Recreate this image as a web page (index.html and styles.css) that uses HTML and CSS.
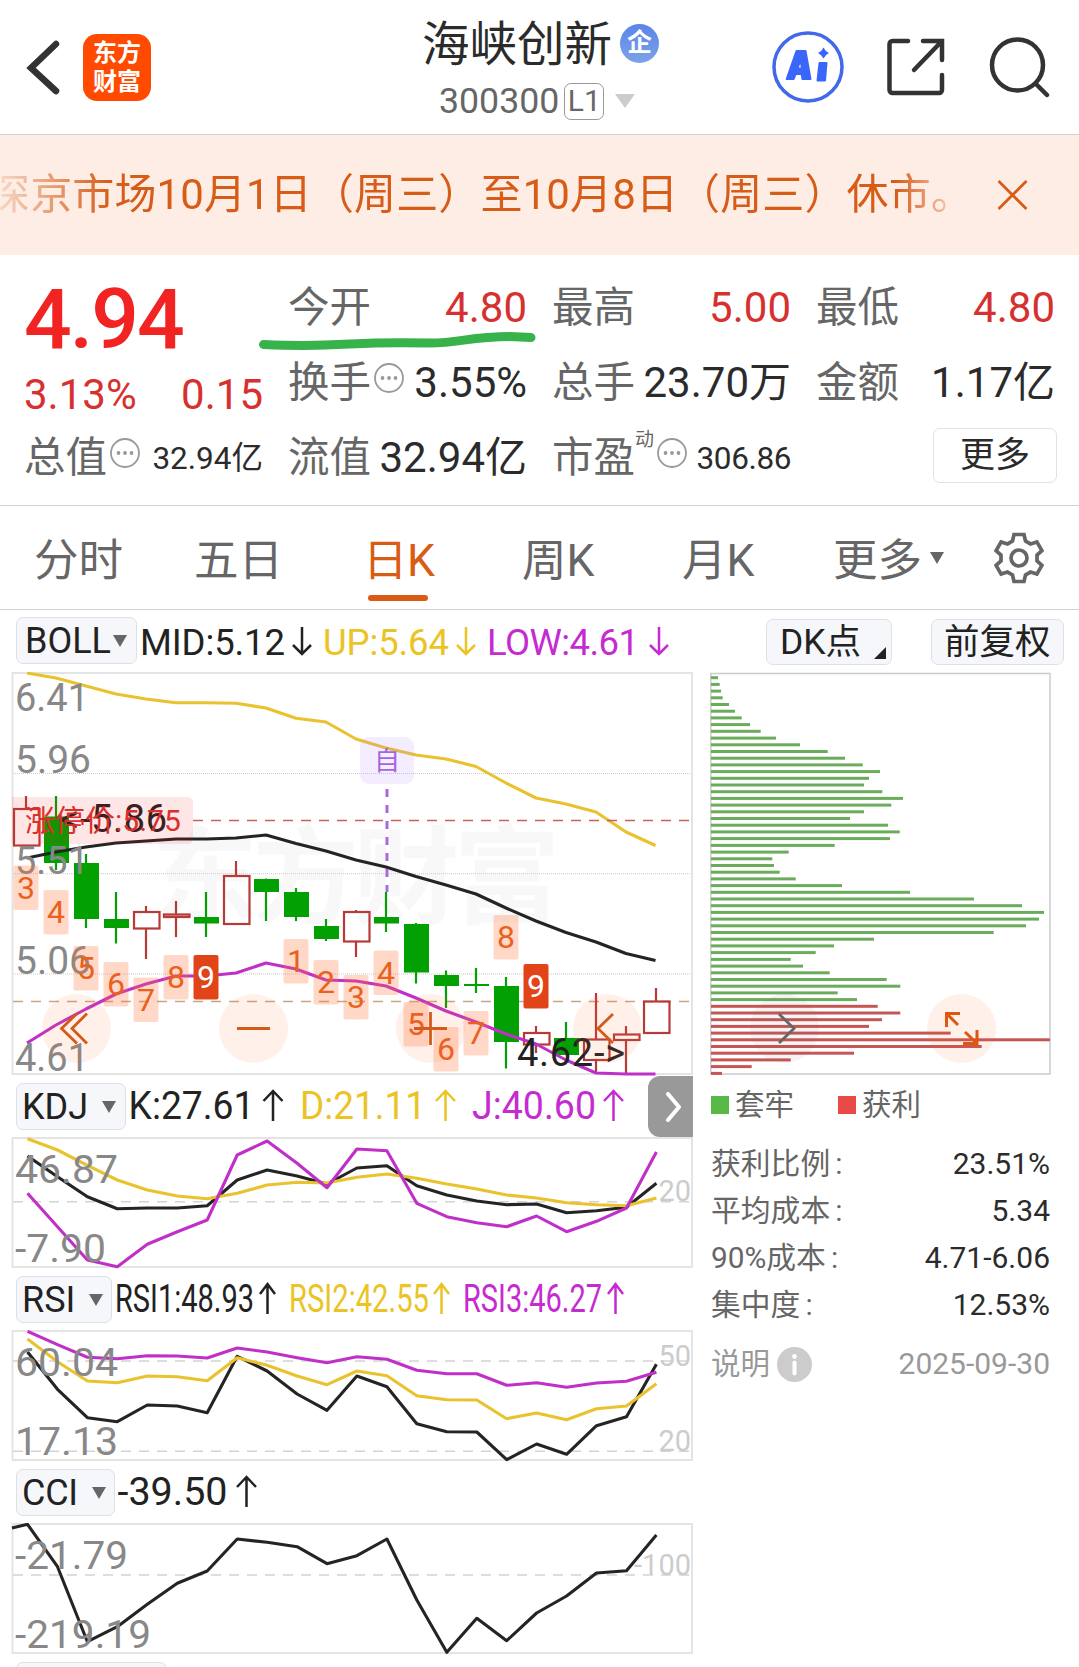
FILE: index.html
```html
<!DOCTYPE html>
<html lang="zh-CN">
<head>
<meta charset="utf-8">
<title>海峡创新 300300</title>
<link rel="stylesheet" href="styles.css">
</head>
<body>
<header class="top">
  <svg class="back" width="36" height="60" viewBox="0 0 36 60"><path d="M31 7 6 31 31 54" /></svg>
  <div class="logo"><span>东方</span><span>财富</span></div>
  <div class="title">
    <div class="name">海峡创新<span class="ent">企</span></div>
    <div class="code">300300<span class="lv">L1</span><i class="caret"></i></div>
  </div>
  <div class="tools">
    <svg width="72" height="72" viewBox="0 0 72 72"><circle cx="36" cy="36" r="34" fill="none" stroke="#4169e8" stroke-width="3.5"/><path d="M24.500 20h9l5 28h-8l-.8-5h-6l-2 5h-7zM28.500 29l-3 8.500h4.500z" fill="#3b66fa" stroke="#3b66fa" stroke-width="2" stroke-linejoin="round" fill-rule="evenodd"/><path d="M47.500 32h7l-1.500 17.500h-7.500z" fill="#3b66fa" stroke="#3b66fa" stroke-width="2" stroke-linejoin="round"/><path d="M51.500 16.500 Q53 20 57 22 Q53 24 51.500 27.500 Q50 24 46 22 Q50 20 51.500 16.500z" fill="#3b66fa"/></svg>
    <svg class="line-icon" width="60" height="60" viewBox="0 0 60 60"><path d="M22 4H6.500a3 3 0 0 0-3 3V53a3 3 0 0 0 3 3H53a3 3 0 0 0 3-3V38M37 4H56V23M55 5 28 33"/></svg>
    <svg class="line-icon" width="62" height="62" viewBox="0 0 62 62"><circle cx="28.500" cy="29" r="25.500"/><path d="m47 48 11 11"/></svg>
  </div>
</header>

<div class="notice">
  <div class="notice-view"><span>深京市场10月1日（周三）至10月8日（周三）休市。</span></div>
  <svg width="32" height="32" viewBox="0 0 32 32"><path d="M1.500 2 29.500 30M29.500 2 1.500 30"/></svg>
</div>

<section class="quote">
  <div class="q-col first">
    <div class="price">4.94</div>
    <div class="change"><span>3.13%</span><span>0.15</span></div>
    <div class="cell"><label>总值</label><svg class="dots" viewBox="0 0 30 30"><use href="#dots"/></svg><b class="small">32.94亿</b></div>
  </div>
  <div class="q-col">
    <div class="cell"><label>今开</label><b class="up">4.80</b></div>
    <div class="cell"><label>换手</label><svg class="dots" viewBox="0 0 30 30"><use href="#dots"/></svg><b>3.55%</b></div>
    <div class="cell"><label>流值</label><b>32.94亿</b></div>
  </div>
  <div class="q-col">
    <div class="cell"><label>最高</label><b class="up">5.00</b></div>
    <div class="cell"><label>总手</label><b>23.70万</b></div>
    <div class="cell"><label>市盈<sup>动</sup></label><svg class="dots" viewBox="0 0 30 30"><use href="#dots"/></svg><b class="small pe">306.86</b></div>
  </div>
  <div class="q-col">
    <div class="cell"><label>最低</label><b class="up">4.80</b></div>
    <div class="cell"><label>金额</label><b>1.17亿</b></div>
    <div class="more">更多</div>
  </div>
  <svg class="scribble" width="290" height="30" viewBox="255 325 290 30"><path d="M263.500 344.500Q300 346 325 345T375 343Q400 342.500 430 343C460 343 470 336.500 510 336.500L531 337.500"/></svg>
</section>

<nav class="tabs">
  <span>分时</span><span>五日</span><span class="on">日K</span><span>周K</span><span>月K</span><span class="t-more">更多<i></i></span>
  <svg class="gear" width="54" height="54" viewBox="-27 -27 54 54"><path d="M-5-23.500H5L6.500-17 11.500-14.100 17.900-16.100 22.900-7.400 18-2.900V2.900L22.900 7.400 17.900 16.100 11.500 14.100 6.500 17 5 23.500H-5L-6.500 17-11.500 14.100-17.900 16.100-22.900 7.400-18 2.900V-2.900L-22.900-7.400-17.900-16.100-11.500-14.100-6.500-17Z"/><circle r="8"/></svg>
</nav>

<main class="body">
  <div class="left">
    <div class="ind head">
      <div class="pick boll">BOLL<i></i></div>
      <svg width="563" height="62" viewBox="137 610 563 62" class="read r38">
        <text x="140" y="654.500" textLength="145">MID:5.12</text><path class="k" d="M302 627V654M293 645l9 9 9-9"/>
        <g class="y"><text x="323" y="654.500" textLength="126">UP:5.64</text><path d="M466 627V654M457 645l9 9 9-9"/></g>
        <g class="m"><text x="487" y="654.500" textLength="152">LOW:4.61</text><path d="M659 627V654M650 645l9 9 9-9"/></g>
      </svg>
    </div>
    <svg class="chart" id="main" width="700" height="404" viewBox="0 672 700 404"></svg>

    <div class="ind">
      <div class="pick kdj">KDJ<i></i></div>
      <svg width="522" height="61" viewBox="126 1076 522 61" class="read">
        <text x="128.500" y="1119" textLength="126" lengthAdjust="spacingAndGlyphs">K:27.61</text><path d="M273 1121V1092M263.500 1101l9.500-10 9.500 10"/>
        <g class="y"><text x="300" y="1119" textLength="126" lengthAdjust="spacingAndGlyphs">D:21.11</text><path d="M445.500 1121V1092M436 1101l9.500-10 9.500 10"/></g>
        <g class="m"><text x="472" y="1119" textLength="124" lengthAdjust="spacingAndGlyphs">J:40.60</text><path d="M613.500 1121V1092M604 1101l9.500-10 9.500 10"/></g>
      </svg>
      <div class="next"><svg width="18" height="30" viewBox="0 0 18 30"><path d="M4 2 15 15 4 28"/></svg></div>
    </div>
    <svg class="chart" id="kdj" width="700" height="132" viewBox="0 1137 700 132"></svg>

    <div class="ind">
      <div class="pick rsi">RSI<i></i></div>
      <svg width="580" height="61" viewBox="112 1269 580 61" class="read">
        <text x="115" y="1312" textLength="139" lengthAdjust="spacingAndGlyphs">RSI1:48.93</text><path d="M267.500 1314V1285M260 1294l7.500-10 7.500 10"/>
        <g class="y"><text x="289" y="1312" textLength="140" lengthAdjust="spacingAndGlyphs">RSI2:42.55</text><path d="M441.500 1314V1285M434 1294l7.500-10 7.500 10"/></g>
        <g class="m"><text x="463" y="1312" textLength="139" lengthAdjust="spacingAndGlyphs">RSI3:46.27</text><path d="M615.500 1314V1285M608 1294l7.500-10 7.500 10"/></g>
      </svg>
    </div>
    <svg class="chart" id="rsi" width="700" height="132" viewBox="0 1330 700 132"></svg>

    <div class="ind">
      <div class="pick cci">CCI<i></i></div>
      <svg width="570" height="61" viewBox="115 1462 570 61" class="read">
        <text x="117.500" y="1505" textLength="110" lengthAdjust="spacingAndGlyphs">-39.50</text><path d="M246.500 1507V1478M237 1487l9.500-10 9.500 10"/>
      </svg>
    </div>
    <svg class="chart" id="cci" width="700" height="132" viewBox="0 1523 700 132"></svg>
    <div class="ind"><div class="pick last"></div></div>
  </div>

  <aside class="right">
    <div class="opts"><div class="opt dk">DK点<i></i></div><div class="opt fq">前复权</div></div>
    <svg class="chart" id="chips" width="379" height="404" viewBox="700 672 379 404"></svg>
    <div class="legend"><i class="g"></i><span>套牢</span><i class="r"></i><span>获利</span></div>
    <dl class="facts">
      <div><dt>获利比例<i>:</i></dt><dd>23.51%</dd></div>
      <div><dt>平均成本<i>:</i></dt><dd>5.34</dd></div>
      <div><dt>90%成本<i>:</i></dt><dd>4.71-6.06</dd></div>
      <div><dt>集中度<i>:</i></dt><dd>12.53%</dd></div>
    </dl>
    <div class="foot"><span>说明</span><svg width="35" height="35" viewBox="0 0 35 35"><circle cx="17.500" cy="17.500" r="17.500" fill="#ccc"/><circle cx="17.500" cy="9.500" r="2.400" fill="#fff"/><path d="M17.500 15.500V26.500" stroke="#fff" stroke-width="4" stroke-linecap="round"/></svg><time>2025-09-30</time></div>
  </aside>
</main>

<svg width="0" height="0" class="defs"><defs><g id="dots"><circle cx="15" cy="15" r="14" fill="none" stroke="#999" stroke-width="1.800"/><circle cx="8.500" cy="15" r="1.900" fill="#999"/><circle cx="15" cy="15" r="1.900" fill="#999"/><circle cx="21.500" cy="15" r="1.900" fill="#999"/></g></defs></svg>
<script src="charts.js"></script>
</body>
</html>
```
FILE: styles.css
```css
* { box-sizing: border-box; }
body { margin: 0; width: 1079px; height: 1667px; overflow: hidden; background: #fff; color: #2b2b2b; font-family: Roboto, "Noto Sans CJK SC", sans-serif; }
i, b { font-style: normal; font-weight: 400; }
svg { display: block; flex: none; }
.defs { position: absolute; }

.top { display: flex; align-items: flex-start; height: 135px; border-bottom: 1px solid #d2d2d2; }
.back { margin: 37px 0 0 25px; }
.back path { fill: none; stroke: #333; stroke-width: 6.500; stroke-linecap: round; stroke-linejoin: miter; }
.logo { margin: 34px 0 0 22px; width: 68px; height: 67px; border-radius: 14px; background: #ff4a00; color: #fff; display: flex; flex-direction: column; justify-content: center; align-items: center; font-weight: 700; font-size: 24px; line-height: 29px; }
.title { width: 260px; margin-left: 271px; }
.name { display: flex; align-items: center; margin-top: 15px; font-size: 47.500px; line-height: 60px; height: 60px; white-space: nowrap; }
.ent { width: 39px; height: 39px; margin: -3px 0 0 8px; border-radius: 50%; background: linear-gradient(#5b84e8, #7ba3e8); color: #fff; font-size: 25px; line-height: 37px; text-align: center; font-weight: 700; }
.code { display: flex; align-items: center; margin: 6px 0 0 17px; font-size: 35.700px; line-height: 40px; color: #666; }
.lv { width: 40px; height: 37px; margin-left: 5px; border: 1.500px solid #999; border-radius: 7px; font-size: 30px; line-height: 34px; text-align: center; }
.caret { margin-left: 11px; border: 10.500px solid transparent; border-top: 14px solid #ccc; border-bottom: 0; }
.tools { display: flex; align-items: center; margin: 31px 0 0 90px; }
.tools svg + svg { margin-left: 42px; }
.tools svg:nth-child(3) { margin-left: 43px; }
.line-icon { fill: none; stroke: #333; stroke-width: 4.500; stroke-linecap: round; }

.notice { display: flex; align-items: center; height: 120px; background: #fdede4; color: #d65c18; }
.notice-view { width: 954px; overflow: hidden; margin-right: 43px; font-size: 42px; line-height: 60px; letter-spacing: .13px; white-space: nowrap; -webkit-mask-image: linear-gradient(90deg, rgba(0,0,0,.15) 0, #000 110px, #000 895px, rgba(0,0,0,.2) 954px); mask-image: linear-gradient(90deg, rgba(0,0,0,.15) 0, #000 110px, #000 895px, rgba(0,0,0,.2) 954px); }
.notice-view span { margin-left: -12px; }
.notice svg path { stroke: #d65c18; stroke-width: 2.800; fill: none; }

.quote { position: relative; display: grid; grid-template-columns: repeat(4, 238px); column-gap: 26px; padding: 15px 0 0 25px; height: 251px; border-bottom: 1px solid #d2d2d2; }
.price { color: #f12423; font-weight: 500; font-size: 84px; line-height: 100px; margin: 0 0 0 -1px; letter-spacing: -1.900px; height: 100px; }
.change { display: flex; justify-content: space-between; color: #d6312f; font-size: 42px; line-height: 50px; margin: 0 0 0 -1px; }
.cell { display: flex; align-items: baseline; height: 75px; line-height: 76px; position: relative; }
.cell label { font-size: 41.500px; color: #666; white-space: nowrap; margin-left: -1px; }
.cell b { margin-left: auto; font-size: 42px; white-space: nowrap; }
.cell b.small { font-size: 31.500px; transform: translateY(-3px); }
.cell b.pe { letter-spacing: -.4px; }
.cell .up { color: #d6312f; }
.cell sup { font-size: 19px; line-height: 0; vertical-align: 26px; }
.dots { width: 30px; height: 30px; align-self: flex-start; margin: 18px 0 0 3px; }
.more { width: 124px; height: 55px; margin: 8px -2px 0 auto; border: 1.500px solid #e0e2e5; border-radius: 7px; font-size: 35px; line-height: 54px; text-align: center; }
.scribble { position: absolute; left: 255px; top: 70px; }
.scribble path { fill: none; stroke: #38b24a; stroke-width: 9; stroke-linecap: round; }

.tabs { display: flex; align-items: center; height: 104px; border-bottom: 1px solid #d2d2d2; font-size: 44.500px; line-height: 60px; color: #666; padding: 6px 0 0 34px; white-space: nowrap; }
.tabs span { position: relative; width: 160px; }
.tabs span:nth-child(2) { width: 169px; }
.tabs .on { color: #d85c14; width: 159px; letter-spacing: -.5px; }
.tabs .on::after { content: ""; position: absolute; left: 5px; top: 64px; width: 60px; height: 6px; border-radius: 3px; background: #d85c14; }
.tabs span:nth-child(5) { width: 151px; }
.tabs .t-more { width: 159px; display: flex; align-items: center; }
.t-more i { border: 7.500px solid transparent; border-top: 12px solid #666; border-bottom: 0; margin: -6px 0 0 8px; }
.gear { fill: none; stroke: #666; stroke-width: 3.700; stroke-linejoin: miter; margin-top: -5px; }

.body { display: flex; }
.left { width: 700px; flex: none; }
.ind { display: flex; height: 61px; padding: 7px 0 0 16px; }
.ind.head { height: 62px; }
.read { margin-top: -7px; font-size: 39px; fill: #222; }
.r38 { font-size: 36.500px; }
.read path { fill: none; stroke: #222; stroke-width: 2.500; }
.read .y { fill: #ebc324; }
.read .y path { stroke: #ebc324; }
.read .m { fill: #c52bd0; }
.read .m path { stroke: #c52bd0; }
.pick { display: flex; align-items: center; height: 47px; border: 1.500px solid #dde0e6; border-radius: 7px; background: #f6f7fa; font-size: 36px; padding-left: 5px; color: #222; flex: none; }
.pick i { border: 7.500px solid transparent; border-top: 12px solid #666; border-bottom: 0; margin-left: 14px; }
.pick.boll { width: 121px; padding-left: 8px; }
.pick.boll i { margin-left: 2px; }
.pick.kdj { width: 110px; }
.pick.rsi { width: 96px; }
.pick.cci { width: 99px; letter-spacing: -.3px; }
.pick.last { width: 151px; }
.next { width: 45px; height: 61px; margin-top: -7px; border-radius: 12px 0 0 12px; background: #999; display: flex; align-items: center; justify-content: center; padding-left: 4px; }
.next path { fill: none; stroke: #fff; stroke-width: 4; stroke-linecap: round; stroke-linejoin: round; }

.right { flex: 1; }
.opts { display: flex; height: 62px; padding: 9px 0 0 66px; }
.opt { position: relative; height: 46px; border: 1.500px solid #dde0e6; border-radius: 7px; background: #f6f7fa; font-size: 35.500px; line-height: 44px; color: #222; white-space: nowrap; }
.dk { width: 126px; padding-left: 13px; margin-right: 39px; }
.dk i { position: absolute; right: 5px; bottom: 5px; border: 6px solid #222; border-top-color: transparent; border-left-color: transparent; }
.fq { width: 133px; padding-left: 12px; }
.legend { display: flex; align-items: center; height: 56px; padding: 2px 0 0 11px; font-size: 29.500px; line-height: 40px; color: #666; }
.legend i { width: 18px; height: 18px; margin-right: 6px; }
.legend .g { background: #5ab946; }
.legend .r { background: #e84a48; margin-left: 44px; }
.facts { margin: 8px 29px 0 11px; font-size: 30px; line-height: 47px; color: #666; }
.facts dt { font-size: 29.800px; }
.facts dt i { margin-left: 5px; }
.facts div { display: flex; justify-content: space-between; height: 47px; }
.facts dd { margin: 0; color: #2b2b2b; }
.foot { display: flex; align-items: center; margin: 16px 29px 0 11px; font-size: 30px; line-height: 40px; color: #999; }
.foot span { font-size: 29.500px; }
.foot svg { margin-left: 7px; }
.foot time { margin-left: auto; }

.chart .axis { fill: #888; font-size: 39px; }
.chart .ref { fill: #ccc; font-size: 29px; }
.chart .frame { fill: none; stroke: #e2e2e2; stroke-width: 1.800; }
.chart .line { fill: none; stroke-width: 3.100; stroke-linejoin: round; }
```
FILE: charts.js
```js
const YEL = '#e9c22e', BLK = '#242424', MAG = '#c030c8', GREEN = '#02a002', RED = '#b83a38', ORANGE = '#d45a18';
const el = id => document.getElementById(id);
const line = (pts, c) => `<polyline class="line" stroke="${c}" points="${pts.join(' ')}"/>`;
const series = (base, ys, c, lead) => line([...(lead || []), ...ys.map((y, i) => (27.5 + i * 29.95).toFixed(1) + ',' + (base + y / 3).toFixed(1))], c);
const dash = (y, c, x1 = 13, w = 1.5, d = '10 8') => `<path d="M${x1} ${y}H691" stroke="${c}" stroke-width="${w}" stroke-dasharray="${d}"/>`;
const axis = (t, y, w) => `<text class="axis" x="15" y="${y}" textLength="${w}" lengthAdjust="spacingAndGlyphs">${t}</text>`;
const refText = (t, y) => `<text class="ref" x="691" y="${y}" text-anchor="end">${t}</text>`;
const frame = (y, h) => `<rect class="frame" x="12.500" y="${y}" width="679.500" height="${h}"/>`;

// [type, high, bodyTop, bodyBottom, low]; u = hollow rise, d = solid fall
const candles = [
  ['u',796,809,845.5,845.5],['d',796,816.5,863,870],['d',854,863,919,928],['d',892,919,928,943.5],
  ['u',906,912,928.5,959],['u',901,914.5,917,937],['d',892,917,923.5,937],['u',861,876,924,924],
  ['d',878.5,879,892,921],['d',888,892,917,921],['d',919,926,939,941],['u',910,912,941.5,957],
  ['d',892,917,923.5,932],['d',923,924,972.5,983.5],['d',970.5,975,986,1008],['d',968,984,986,993],
  ['d',977,986,1042,1068.5],['u',1026,1033,1044.5,1053],['d',1022,1038,1055,1055],['u',993,1039.5,1060,1072],
  ['u',1026,1034.5,1040,1074],['u',988,1001.5,1033,1033]];
const marks = [[3,26,865.5],[4,56,890],[5,86,946],[6,116,962],[7,146,977.5],[8,176,955],[9,206,955],[1,296,939],[2,326,960],
  [3,356,975],[4,386,950.5],[5,416,1002],[6,446,1027],[7,476,1011],[8,506,915],[9,536,964]];

const candleSvg = candles.map(([t, h, a, b, l], i) => {
  const x = 26 + i * 30;
  return t === 'd'
    ? `<path d="M${x} ${h}V${l}" stroke="${GREEN}" stroke-width="2.200"/><rect x="${x - 12}" y="${a}" width="25" height="${b - a}" fill="${GREEN}"/>`
    : `<path d="M${x} ${h}V${a}M${x} ${b}V${l}" stroke="${RED}" stroke-width="2.200"/><rect x="${x - 12}" y="${a}" width="25.500" height="${b - a}" fill="none" stroke="${RED}" stroke-width="2.200"/>`;
}).join('');
const markSvg = marks.map(([n, x, y]) =>
  `<rect x="${x - 12.5}" y="${y}" width="25" height="44.500" rx="2" fill="${n === 9 ? '#e04418' : 'rgba(255,112,50,.27)'}"/>
   <text x="${x}" y="${y + 33}" text-anchor="middle" font-size="32" fill="${n === 9 ? '#fff' : '#e9611c'}">${n}</text>`).join('');

const xs = i => i === 21 ? 655.5 : i ? 26 + 30 * i : 27;
const path = (ys, c) => line(ys.map((y, i) => xs(i) + ',' + y), c);
const disc = (x, f = 'rgba(255,110,50,.1)') => `<circle cx="${x}" cy="1028.500" r="34.500" fill="${f}"/>`;

el('main').innerHTML =
  `<text x="152" y="915" font-size="106" font-weight="700" textLength="408" fill="#f8f8f8">东方财富</text>` +
  [773.5, 873.7, 974].map(y => dash(y, '#ccc', 13, 1, '1 1')).join('') +
  frame(673, 401) +
  dash(1001.5, '#c9a581', 13, 1.5, '10 8') +
  candleSvg +
  path([673,678,686,694,699,702.7,702.7,703.3,708,718.3,722,739,748,755,759,766.5,783,798,804,812,832,845.5], YEL) +
  path([858,852,847,843,841,839,839,838,835,843.5,851,860,867,876.5,885,894,908,921,932.5,942,953.5,960.5], BLK) +
  path([1043,1025,1009,994,984,976,976,973,963,969,980,981,986,998,1011,1022,1034,1044,1060,1073,1074,1074], MAG) +
  axis('6.41', 711.3, 74) + axis('5.96', 773, 76) + axis('5.51', 873.5, 74) + axis('5.06', 974, 76) + axis('4.61', 1071, 74) +
  markSvg +
  `<text x="60" y="831.500" font-size="38" fill="#222" textLength="107">&lt;-5.86</text>
   <text x="517" y="1065.700" font-size="38" fill="#222" textLength="108">4.62-&gt;</text>
   <path d="M12 797H188a5 5 0 0 1 5 5V839a5 5 0 0 1-5 5H12z" fill="rgba(255,30,30,.11)"/>
   <text x="25" y="831" font-size="30" fill="#dc2f2d">涨停价:5.75</text>` +
  dash(820.5, '#c9605a', 193) +
  `<rect x="360" y="737" width="54" height="47" rx="9" fill="rgba(190,140,255,.17)"/>
   <text x="387" y="770" font-size="26" text-anchor="middle" fill="#a566dc">自</text>
   <path d="M387 789V892" stroke="#a76be0" stroke-width="3" stroke-dasharray="8 8"/>` +
  disc(76.5) + disc(253.5) + disc(430.5) + disc(607.5) +
  `<path d="M77 1013.500 61.500 1028.500 77 1043.500M87 1013.500 72 1028.500 87 1043.500M237 1028.500H270M414 1028.500H447M430.500 1012V1045M613 1014 598 1028.500 613 1043" fill="none" stroke="${ORANGE}" stroke-width="2.800"/>`;

el('kdj').innerHTML = frame(1138, 129) + dash(1201.7, '#d4d4d4') + refText('20', 1201) +
  series(1070, [258,320,380,416,414,414,407,330,300,318,342,294,287,347,375,393,404,402,428,422,412,340], BLK) +
  series(1070, [206,240,286,330,360,378,386,370,345,337,339,322,312,325,342,357,375,384,398,404,407,384], YEL) +
  series(1070, [370,470,570,590,523,485,450,255,213,280,353,237,242,400,440,458,470,438,485,454,414,246], MAG) +
  axis('46.87', 1182.7, 103) + axis('-7.90', 1262, 91);

el('rsi').innerHTML = frame(1331, 129) + dash(1361, '#d4d4d4') + dash(1451.3, '#d4d4d4') + refText('50', 1365.5) + refText('20', 1451) +
  series(1270, [246,358,443,455,405,408,428,259,303,372,421,318,350,461,485,486,569,522,553,467,440,283], BLK) +
  series(1270, [207,275,333,338,318,320,332,263,286,318,344,303,317,377,389,390,446,429,449,416,408,341], YEL) +
  series(1270, [184,224,262,266,257,258,264,234,246,263,278,260,268,301,311,311,346,338,352,339,334,307], MAG) +
  axis('60.04', 1375.7, 103) + axis('17.13', 1455, 103);

el('cci').innerHTML = frame(1524, 129) + dash(1575, '#d4d4d4') + refText('-100', 1575) +
  series(1270, [763,890,1115,1070,1003,940,903,807,817,830,881,857,807,990,1147,1045,1112,1029,978,909,902,795], BLK, ['12,1528']) +
  axis('-21.79', 1568.7, 113) + axis('-219.19', 1648, 136);

// Cost distribution: bar ends on a 3x scale from the left edge; the last eleven are in profit
const ends = [84,89,93,98,117,135,155,180,212,258,330,413,465,518,570,537,522,577,639,604,522,480,594,629,600,434,296,247,252,269,317,456,660,852,996,1062,1047,1008,911,552,432,377,302,339,419,590,631,443,501,563,631,576,537,782,1080,875,492,302,185,96];
el('chips').innerHTML = `<rect x="710.800" y="673.500" width="339.200" height="400.500" fill="none" stroke="#ccc" stroke-width="1.500"/>` +
  ends.map((e, i) => `<rect x="711" y="${(676.2 + i * 6.706).toFixed(1)}" width="${((e - 63) / 3).toFixed(1)}" height="3" fill="${i < 49 ? '#6bac5c' : '#c65654'}"/>`).join('') +
  disc(784.5, 'rgba(130,100,100,.08)') + disc(961.5) +
  `<path d="M779 1014 794 1028.500 779 1043" fill="none" stroke="#666" stroke-width="2.800"/>
   <path d="M960 1013.500H946.500V1027M947 1014 958 1025M965 1032 977 1043.500M963 1043.500H977V1030" fill="none" stroke="#e0560f" stroke-width="3"/>`;
```
